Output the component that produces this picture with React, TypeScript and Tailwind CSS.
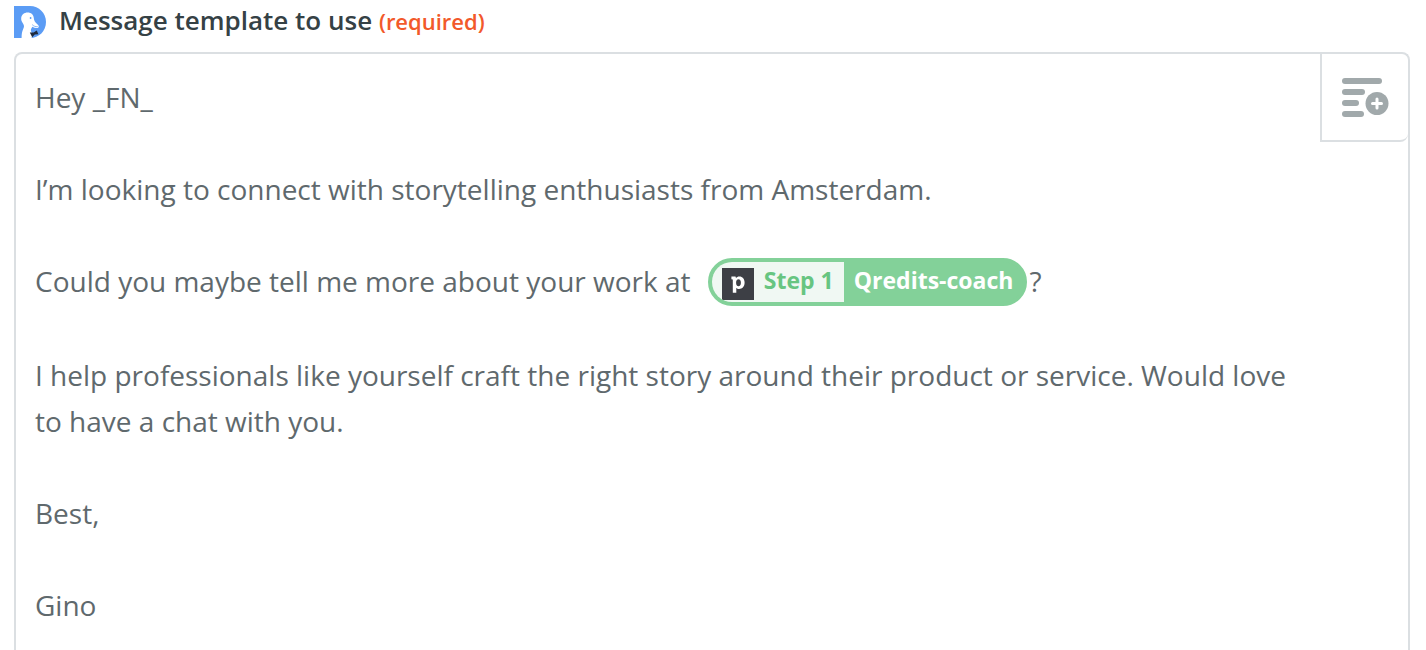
import React from "react";

function DuckLogo() {
  return (
    <svg className="h-8 w-8 shrink-0" viewBox="0 0 32 32" aria-hidden="true">
      <path d="M0 0H16C25 0 32 7 32 16S25 32 16 32H0Z" fill="#5b9cf5" />
      <path
        d="M7.6 32C7.6 28 8 25.6 9.2 23C10.2 20.8 10.4 19.4 9 17.4C7.6 15.4 7 14 7.2 12C7.6 8.8 10.2 6.6 13.6 6.6C17.2 6.6 19.5 8.8 19.8 12C20 14.6 21 16.2 22.8 17.8C24.4 19.2 25.2 20.2 24.6 21.2C23.8 22.5 20.6 22.2 18.4 20.8C17.2 22.4 16.6 23.8 17 25.2L19 29L17.4 32Z"
        fill="#fff"
      />
      <path d="M18.2 18.6C19.4 20 21.4 20.9 23.8 20.7" fill="none" stroke="#5b9cf5" strokeWidth="0.7" />
      <circle cx="16.6" cy="12" r="0.9" fill="#5b9cf5" />
      <path d="M15.8 26.6L19.6 26.4L22.8 24.4L24.4 28.2L20.8 28.6L18.2 31.2Z" fill="#1f2a3c" />
    </svg>
  );
}

function InsertFieldIcon() {
  return (
    <svg className="h-10 w-12" viewBox="0 0 48 40" aria-hidden="true">
      <g fill="#a1a9ab">
        <rect x="1" y="0" width="40" height="6" rx="3" />
        <rect x="1" y="11" width="23" height="6" rx="3" />
        <rect x="1" y="22" width="17" height="6" rx="3" />
        <rect x="1" y="33" width="22" height="6" rx="3" />
        <circle cx="36" cy="25.5" r="11.5" />
      </g>
      <path d="M36 21V30M31.5 25.5H40.5" stroke="#fff" strokeWidth="3" strokeLinecap="round" />
    </svg>
  );
}

function FieldChip() {
  return (
    <span
      contentEditable={false}
      className="mr-0.5 ml-2.5 inline-flex h-12 items-stretch overflow-hidden rounded-full border-4 border-[#83d199] bg-[#83d199] align-top text-[23px] leading-9 font-bold"
    >
      <span className="flex items-start gap-2.5 bg-[#f0f8f3] px-2.5 text-[#67c581]">
        <span className="mt-1.5 h-8 w-8 bg-[#3d3f45]">
          <svg className="h-8 w-8" viewBox="0 0 32 32" aria-hidden="true">
            <path
              fillRule="evenodd"
              d="M9.4 8.6H13.5L14 10C14.8 8.9 15.8 8.4 17.3 8.4C20.6 8.4 22.6 10.9 22.6 14.6C22.6 18.5 20.3 21 17.1 21C15.8 21 14.9 20.6 14.3 19.8V24.8H10.8V11.4L9.4 11.2ZM14.1 14.7C14.1 17 14.9 18.2 16.5 18.2C18 18.2 18.9 17 18.9 14.7C18.9 12.4 18 11.2 16.5 11.2C14.9 11.2 14.1 12.4 14.1 14.7Z"
              fill="#fff"
            />
          </svg>
        </span>
        Step 1
      </span>
      <span className="px-2.5 text-white">Qredits-coach</span>
    </span>
  );
}

export default function App() {
  return (
    <main className="flex h-screen flex-col overflow-hidden bg-white pt-1.5 pr-4 pl-3.5 font-['Open_Sans',sans-serif]">
      <div className="flex h-[46px] shrink-0 items-start gap-[13px]">
        <DuckLogo />
        <div id="template-label" className="-mt-1 text-[26px] leading-9 font-semibold text-[#354145]">
          Message template to use <span className="text-[22px] text-[#f2592a]">(required)</span>
        </div>
      </div>
      <section className="flex flex-1 items-start rounded-t-lg border-2 border-b-0 border-[#dbdfe2]">
        <div
          role="textbox"
          aria-multiline="true"
          aria-labelledby="template-label"
          contentEditable
          suppressContentEditableWarning
          spellCheck={false}
          className="min-w-0 flex-1 pt-5 pr-5 pl-[19px] text-[28px] leading-[46px] text-[#5f696d] outline-none"
        >
          <p>Hey _FN_</p>
          <p><br /></p>
          <p>I’m looking to connect with storytelling enthusiasts from Amsterdam.</p>
          <p><br /></p>
          <p>
            Could you maybe tell me more about your work at <FieldChip />?
          </p>
          <p><br /></p>
          <p>I help professionals like yourself craft the right story around their product or service. Would love to have a chat with you.</p>
          <p><br /></p>
          <p>Best,</p>
          <p><br /></p>
          <p>Gino</p>
        </div>
        <button
          type="button"
          aria-label="Insert a field"
          className="flex h-22 w-[88px] shrink-0 items-center justify-center rounded-br-lg border-b-2 border-l-2 border-[#dbdfe2] pt-0.5"
        >
          <InsertFieldIcon />
        </button>
      </section>
    </main>
  );
}
